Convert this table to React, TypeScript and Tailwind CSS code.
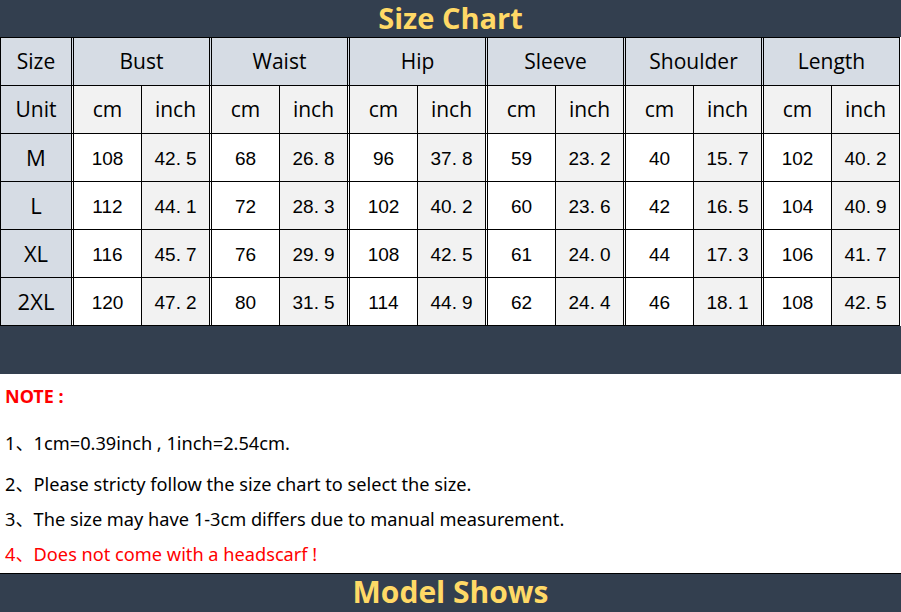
import React from "react";

const groups = ["Bust", "Waist", "Hip", "Sleeve", "Shoulder", "Length"];

const rows: string[][] = [
  ["M", "108", "42.5", "68", "26.8", "96", "37.8", "59", "23.2", "40", "15.7", "102", "40.2"],
  ["L", "112", "44.1", "72", "28.3", "102", "40.2", "60", "23.6", "42", "16.5", "104", "40.9"],
  ["XL", "116", "45.7", "76", "29.9", "108", "42.5", "61", "24.0", "44", "17.3", "106", "41.7"],
  ["2XL", "120", "47.2", "80", "31.5", "114", "44.9", "62", "24.4", "46", "18.1", "108", "42.5"],
];

const headFont = { fontFamily: '"Open Sans", "Noto Sans", sans-serif' };
const numFont = { fontFamily: '"Liberation Sans", Arial, sans-serif' };
const noteFont = { fontFamily: '"Noto Sans", "Open Sans", "Noto Sans CJK SC", sans-serif' };

function Inch({ v }: { v: string }) {
  const [a, b] = v.split(".");
  return (
    <span>
      {a}
      <span className="mr-[5px]">.</span>
      {b}
    </span>
  );
}

export default function App() {
  return (
    <div className="w-[901px] h-[612px] bg-white overflow-hidden">
      {/* Title bar */}
      <div className="h-[37px] pb-[2px] bg-[#333f4f] flex items-center justify-center">
        <span className="text-[#ffd966] font-bold text-[29px] leading-[34px]" style={headFont}>
          Size Chart
        </span>
      </div>

      {/* Table */}
      <div className="w-[900px] border-t border-black">
        {/* Header row */}
        <div className="flex h-[48px] border-b border-l border-r border-black">
          <div className="w-[70px] bg-[#d6dce4] flex items-center justify-center text-[21px] text-black" style={headFont}>
            Size
          </div>
          {groups.map((g) => (
            <div
              key={g}
              className="w-[138px] border-l-[3px] border-double border-black bg-[#d6dce4] flex items-center justify-center text-[21px] text-black"
              style={headFont}
            >
              {g}
            </div>
          ))}
        </div>
        {/* Unit row */}
        <div className="flex h-[48px] border-b border-l border-r border-black">
          <div className="w-[70px] bg-[#d6dce4] flex items-center justify-center text-[21px] text-black" style={headFont}>
            Unit
          </div>
          {groups.map((g) => (
            <div key={g} className="w-[138px] border-l-[3px] border-double border-black flex">
              <div className="w-[67px] bg-[#f2f2f2] flex items-center justify-center text-[21px] text-black" style={headFont}>
                cm
              </div>
              <div className="w-[68px] border-l border-black bg-[#f2f2f2] flex items-center justify-center text-[21px] text-black" style={headFont}>
                inch
              </div>
            </div>
          ))}
        </div>
        {/* Data rows */}
        {rows.map((r) => (
          <div key={r[0]} className="flex h-[48px] border-b border-l border-r border-black">
            <div className="w-[70px] bg-[#d6dce4] flex items-center justify-center text-[22px] text-black" style={headFont}>
              {r[0]}
            </div>
            {groups.map((g, i) => (
              <div key={g} className="w-[138px] border-l-[3px] border-double border-black flex">
                <div className="w-[67px] bg-white flex items-center justify-center pt-[3px] text-[19px] text-black" style={numFont}>
                  {r[1 + i * 2]}
                </div>
                <div className="w-[68px] border-l border-black bg-[#f2f2f2] flex items-center justify-center pt-[3px] text-[19px] text-black" style={numFont}>
                  <Inch v={r[2 + i * 2]} />
                </div>
              </div>
            ))}
          </div>
        ))}
      </div>

      {/* Dark band */}
      <div className="h-[48px] bg-[#333f4f]" />

      {/* Notes */}
      <div className="pl-[5px]" style={noteFont}>
        <div className="h-[44px] flex items-center text-[18px] font-bold text-[#ff0000]">NOTE :</div>
        <div className="h-[51px] pt-[1px] flex items-center text-[18.2px] text-black">1、1cm=0.39inch , 1inch=2.54cm.</div>
        <div className="h-[30px] pt-[1px] flex items-center text-[18.2px] text-black">
          2、Please stricty follow the size chart to select the size.
        </div>
        <div className="h-[41px] pt-[1px] flex items-center text-[18.2px] text-black">
          3、The size may have 1-3cm differs due to manual measurement.
        </div>
        <div className="h-[28px] pt-[1px] flex items-center text-[18.2px] text-[#ff0000]">4、Does not come with a headscarf !</div>
      </div>

      {/* Bottom bar */}
      <div className="mt-[5px] border-t border-black h-[40px] pb-[4px] bg-[#333f4f] flex items-center justify-center">
        <span className="text-[#ffd966] font-bold text-[30px] leading-[34px]" style={headFont}>
          Model Shows
        </span>
      </div>
    </div>
  );
}
